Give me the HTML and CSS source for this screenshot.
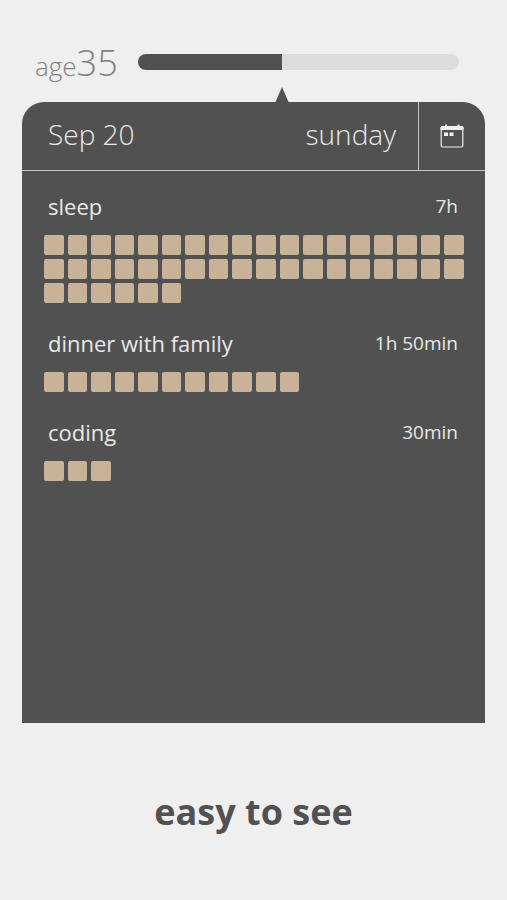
FILE: index.html
```html
<!DOCTYPE html>
<html lang="en">
<head>
<meta charset="utf-8">
<meta name="viewport" content="width=device-width, initial-scale=1">
<title>Day log</title>
<link rel="stylesheet" href="styles.css">
</head>
<body>
<main class="page">
  <header class="life">
    <p class="age">age<span class="age-value">35</span></p>
    <div class="life-bar">
      <div class="track"><div class="fill"></div></div>
      <svg class="pointer" viewBox="0 0 16 16" aria-hidden="true"><path d="M8 0 L15 16 H1 Z"/></svg>
    </div>
  </header>

  <section class="panel">
    <div class="panel-head">
      <h1 class="date"><span>Sep 20</span><span>sunday</span></h1>
      <button class="calendar" type="button" aria-label="Calendar">
        <svg viewBox="0 0 24 24" aria-hidden="true">
          <rect x="1.200" y="2.500" width="21.600" height="20.500" rx="1.500" fill="none" stroke="currentColor" stroke-width="1.200"/>
          <path d="M2 2h20a1.500 1.500 0 0 1 1.500 1.500V6H.500V3.500A1.500 1.500 0 0 1 2 2zM5 .5h2v2H5zM17.500 .5h2v2h-2zM4 8.500h4V12H4zM9.500 8.500h4V12h-4z" fill="currentColor"/>
        </svg>
      </button>
    </div>
    <ul class="tasks">
      <li class="task">
        <div class="task-head"><h2>sleep</h2><span>7h</span></div>
        <div class="blocks"><i></i><i></i><i></i><i></i><i></i><i></i><i></i><i></i><i></i><i></i><i></i><i></i><i></i><i></i><i></i><i></i><i></i><i></i><i></i><i></i><i></i><i></i><i></i><i></i><i></i><i></i><i></i><i></i><i></i><i></i><i></i><i></i><i></i><i></i><i></i><i></i><i></i><i></i><i></i><i></i><i></i><i></i></div>
      </li>
      <li class="task">
        <div class="task-head"><h2>dinner with family</h2><span>1h 50min</span></div>
        <div class="blocks"><i></i><i></i><i></i><i></i><i></i><i></i><i></i><i></i><i></i><i></i><i></i></div>
      </li>
      <li class="task">
        <div class="task-head"><h2>coding</h2><span>30min</span></div>
        <div class="blocks"><i></i><i></i><i></i></div>
      </li>
    </ul>
  </section>

  <p class="slogan">easy to see</p>
</main>
</body>
</html>
```

FILE: styles.css
```css
* {
  box-sizing: border-box;
}

body {
  margin: 0;
  background: #efefef;
  color: #515151;
  font-family: "Open Sans", "Noto Sans", sans-serif;
}

h1, h2, p, ul {
  margin: 0;
  padding: 0;
  font-weight: 400;
}

.page {
  display: flex;
  flex-direction: column;
  min-height: 100vh;
  padding: 0 22px;
}

.life {
  display: flex;
  align-items: center;
  height: 102px;
  padding: 22px 26px 0 13px;
}

.age {
  width: 103px;
  padding-top: 4px;
  color: #808080;
  font-size: 26px;
  font-weight: 300;
  line-height: 40px;
}

.age-value {
  font-size: 36px;
}

.life-bar {
  position: relative;
  flex: 1;
}

.track {
  height: 16px;
  overflow: hidden;
  border-radius: 8px;
  background: #dcdcdc;
}

.fill {
  width: 45%;
  height: 100%;
  background: #515151;
}

.pointer {
  position: absolute;
  top: 33px;
  left: 45%;
  width: 16px;
  height: 16px;
  margin-left: -8px;
  fill: #515151;
}

.panel {
  flex: 1;
  overflow: hidden;
  border-radius: 22px 22px 0 0;
  background: #515151;
  color: #e8e8e8;
}

.panel-head {
  display: flex;
  height: 69px;
  border-bottom: 1px solid #c4c4c4;
}

.date {
  display: flex;
  flex: 1;
  align-items: center;
  justify-content: space-between;
  padding: 0 22px 4px 26px;
  font-size: 28px;
  font-weight: 350;
  line-height: 40px;
}

.calendar {
  display: flex;
  align-items: center;
  justify-content: center;
  width: 67px;
  padding: 0;
  border: 0;
  border-left: 1px solid #c4c4c4;
  background: none;
  color: #efefef;
}

.calendar svg {
  width: 24px;
  height: 24px;
}

.tasks {
  display: grid;
  gap: 25px;
  padding: 20px 21px 20px 22px;
  list-style: none;
}

.task-head {
  display: flex;
  align-items: center;
  justify-content: space-between;
  height: 30px;
  margin-bottom: 14px;
  padding: 0 6px 0 4px;
  font-size: 19px;
}

.task-head h2 {
  font-size: 22px;
}

.blocks {
  display: grid;
  grid-template-columns: repeat(18, 1fr);
  grid-auto-rows: 20px;
  gap: 4px;
}

.blocks i {
  border-radius: 2px;
  background: #c9b398;
}

.slogan {
  height: 177px;
  padding-top: 65px;
  font-size: 36px;
  font-weight: 700;
  line-height: 48px;
  text-align: center;
}
```
